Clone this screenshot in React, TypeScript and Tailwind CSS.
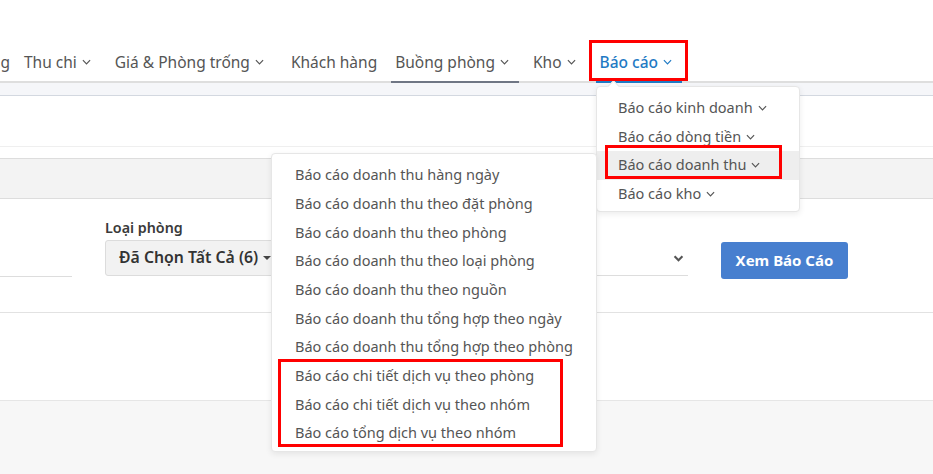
import type React from "react"

const font = "font-['Noto_Sans',sans-serif]"

function Caret({ className = "" }: { className?: string }) {
  return (
    <svg viewBox="0 0 10 6" className={`w-[9px] h-[6px] ${className}`} fill="none">
      <polyline points="1,1 5,5 9,1" stroke="currentColor" strokeWidth="1.3" />
    </svg>
  )
}

const navItems = [
  { label: "Thu chi", caret: true },
  { label: "Giá & Phòng trống", caret: true },
  { label: "Khách hàng", caret: false, extra: "ml-[3px]" },
  { label: "Buồng phòng", caret: true, line: "border-[#6f7684]" },
  { label: "Kho", caret: true },
  { label: "Báo cáo", caret: true, active: true, line: "border-[#1f7ac4]" },
]

const reportGroups = [
  { label: "Báo cáo kinh doanh" },
  { label: "Báo cáo dòng tiền" },
  { label: "Báo cáo doanh thu", open: true },
  { label: "Báo cáo kho" },
]

const revenueReports = [
  "Báo cáo doanh thu hàng ngày",
  "Báo cáo doanh thu theo đặt phòng",
  "Báo cáo doanh thu theo phòng",
  "Báo cáo doanh thu theo loại phòng",
  "Báo cáo doanh thu theo nguồn",
  "Báo cáo doanh thu tổng hợp theo ngày",
  "Báo cáo doanh thu tổng hợp theo phòng",
  "Báo cáo chi tiết dịch vụ theo phòng",
  "Báo cáo chi tiết dịch vụ theo nhóm",
  "Báo cáo tổng dịch vụ theo nhóm",
]

function Highlight({ className }: { className: string }) {
  return <div className={`absolute border-[3px] border-[#ff0000] pointer-events-none ${className}`} />
}

export default function App() {
  return (
    <div className={`relative w-[933px] h-[474px] overflow-hidden bg-white text-[#555] ${font}`}>
      {/* Top menu */}
      <nav className="flex items-stretch gap-[10px] h-[83px] border-b-2 border-[#dedede]">
        <div className="w-[10px] overflow-hidden flex justify-end items-end pb-[7px]">
          <span className="whitespace-nowrap text-[15.5px] leading-[24px]">Lịch phòng</span>
        </div>
        {navItems.map((item) => (
          <div
            key={item.label}
            className={`flex items-end pb-[7px] pl-1 -mb-0.5 border-b-2 ${item.line ?? "border-transparent"} ${
              item.caret ? "pr-[10px]" : "pr-1"
            } ${item.extra ?? ""} ${item.active ? "text-[#1f7ac4] font-medium" : ""}`}
          >
            <span className="whitespace-nowrap text-[15.5px] leading-[24px]">{item.label}</span>
            {item.caret && <Caret className="ml-[5px] mb-[9px]" />}
          </div>
        ))}
      </nav>

      {/* Toolbar strip */}
      <div className="h-[13px] bg-[#f5f6f9] border-b border-[#d3d8e0]" />
      <div className="h-[51px] border-b border-[#efefef]" />

      <div className="mt-[11px] h-[41px] bg-[#f3f3f3] border-y border-[#dddddd]" />

      {/* Filter form */}
      <div className="h-[114px] border-b border-[#e2e2e2] flex items-start">
        <div className="w-[72px] mt-[77px] border-b border-[#dddddd]" />
        <div className="ml-[33px] mt-[19px] w-[180px]">
          <div className="text-[14.3px] leading-[20px] font-semibold text-[#3a3a3a]">Loại phòng</div>
          <div className="mt-[2px] h-[36px] bg-[#f2f2f2] border border-[#dcdcdc] rounded-[3px] flex items-center pl-[13px]">
            <span className="text-[15.8px] font-semibold text-[#333] whitespace-nowrap">Đã Chọn Tất Cả (6)</span>
            <span className="ml-[5px] w-0 h-0 border-x-[4px] border-x-transparent border-t-[4px] border-t-[#444]" />
          </div>
        </div>
        <div className="ml-[20px] mt-[42px] w-[383px] h-[35px] border-b border-[#dddddd] flex items-center justify-end pr-[4px]">
          <svg viewBox="0 0 12 8" className="w-[11px] h-[7px]" fill="none">
            <polyline points="1.5,1.5 6,6 10.5,1.5" stroke="#555" strokeWidth="2.4" />
          </svg>
        </div>
        <button className="ml-[33px] mt-[43px] w-[127px] h-[37px] rounded-[3px] bg-[#477fcf] text-white text-[15px] font-bold">
          Xem Báo Cáo
        </button>
      </div>
      <div className="h-[88px] border-b border-[#e6e6e6]" />
      <div className="h-full bg-[#f7f7f7]" />

      {/* Báo cáo submenu */}
      <div className="absolute left-[596px] top-[86px] w-[204px] bg-white border border-[#e6e6e6] rounded-[4px] shadow-[0_2px_6px_rgba(0,0,0,0.08)] pt-[7px] pb-[3px]">
        <div className="absolute -top-[5px] left-[12px] w-[9px] h-[9px] rotate-45 bg-white border-l border-t border-[#e3e3e3]" />
        {reportGroups.map((g) => (
          <div
            key={g.label}
            className={`h-[28.5px] flex items-center pl-[21px] text-[14.5px] ${g.open ? "bg-[#eeeeee]" : ""}`}
          >
            <span className="whitespace-nowrap">{g.label}</span>
            <Caret className="ml-[5px] w-[8px]" />
          </div>
        ))}
      </div>

      {/* Doanh thu reports */}
      <div className="absolute left-[271px] top-[153px] w-[326px] bg-white border border-[#e6e6e6] rounded-[4px] shadow-[0_2px_6px_rgba(0,0,0,0.08)] pt-[7px] pb-[3px]">
        {revenueReports.map((r) => (
          <div key={r} className="h-[28.67px] flex items-center pl-[23px] text-[14.5px] whitespace-nowrap">
            {r}
          </div>
        ))}
      </div>

      <Highlight className="left-[589px] top-[40px] w-[99px] h-[41px]" />
      <Highlight className="left-[605px] top-[145px] w-[177px] h-[34px]" />
      <Highlight className="left-[278px] top-[359px] w-[285px] h-[88px]" />
    </div>
  )
}
